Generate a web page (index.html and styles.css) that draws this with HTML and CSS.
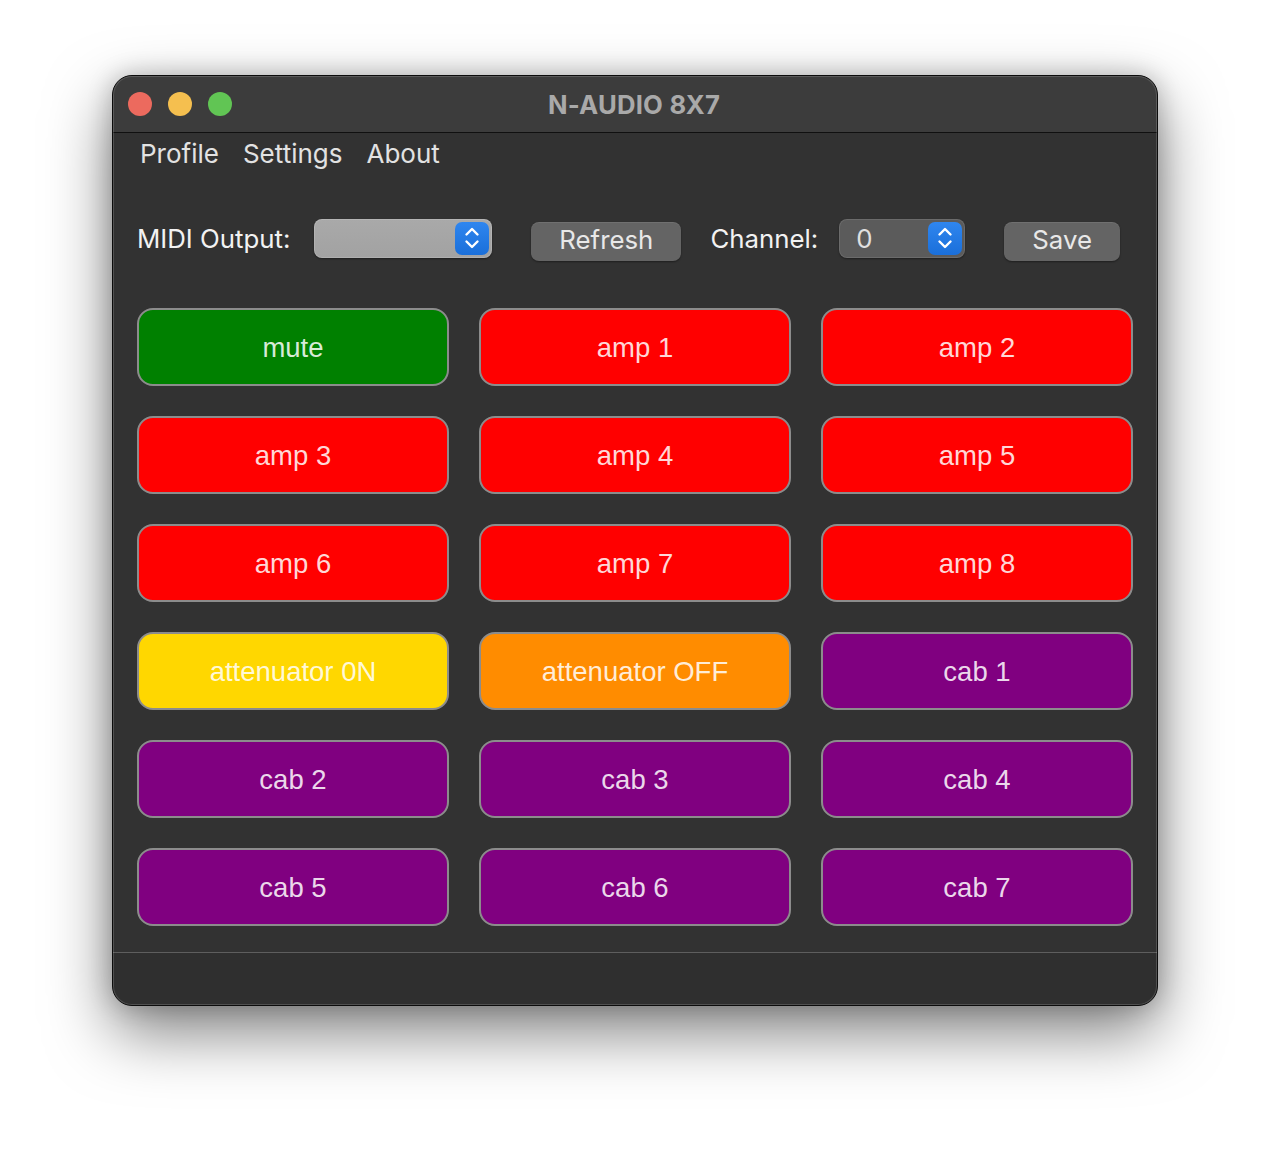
FILE: index.html
```html
<!DOCTYPE html>
<html>
<head>
<meta charset="utf-8">
<link rel="stylesheet" href="styles.css">
</head>
<body>
<div class="window">
  <div class="titlebar">
    <div class="lights">
      <span class="light red"></span>
      <span class="light yellow"></span>
      <span class="light green"></span>
    </div>
    <div class="title">N-AUDIO 8X7</div>
  </div>
  <div class="content">
    <nav class="menu">
      <span class="menu-item">Profile</span>
      <span class="menu-item">Settings</span>
      <span class="menu-item">About</span>
    </nav>
    <div class="controls">
      <span class="label">MIDI Output:</span>
      <div class="popup">
        <span class="stepper"><svg width="20" height="28" viewBox="0 0 20 28"><path d="M4.5 10.5 L10 5 L15.5 10.5 M4.5 17.5 L10 23 L15.5 17.5" fill="none" stroke="#fff" stroke-width="2.4" stroke-linecap="round" stroke-linejoin="round"/></svg></span>
      </div>
      <button class="btn refresh">Refresh</button>
      <span class="label channel-label">Channel:</span>
      <div class="spinner">
        <span class="spin-value">0</span>
        <span class="stepper"><svg width="20" height="28" viewBox="0 0 20 28"><path d="M4.5 10.5 L10 5 L15.5 10.5 M4.5 17.5 L10 23 L15.5 17.5" fill="none" stroke="#fff" stroke-width="2.4" stroke-linecap="round" stroke-linejoin="round"/></svg></span>
      </div>
      <button class="btn save">Save</button>
    </div>
    <div class="grid">
      <div class="pad green">mute</div>
      <div class="pad red">amp 1</div>
      <div class="pad red">amp 2</div>
      <div class="pad red">amp 3</div>
      <div class="pad red">amp 4</div>
      <div class="pad red">amp 5</div>
      <div class="pad red">amp 6</div>
      <div class="pad red">amp 7</div>
      <div class="pad red">amp 8</div>
      <div class="pad gold">attenuator 0N</div>
      <div class="pad orange">attenuator OFF</div>
      <div class="pad purple">cab 1</div>
      <div class="pad purple">cab 2</div>
      <div class="pad purple">cab 3</div>
      <div class="pad purple">cab 4</div>
      <div class="pad purple">cab 5</div>
      <div class="pad purple">cab 6</div>
      <div class="pad purple">cab 7</div>
    </div>
  </div>
  <div class="footer"></div>
</div>
</body>
</html>
```
FILE: styles.css
```css
* { box-sizing: border-box; }
html, body { margin: 0; padding: 0; background: #ffffff; }
body {
  font-family: "Inter", "Open Sans", sans-serif;
  min-height: 1154px;
  padding: 75px 0 148px 112px;
}

.window {
  width: 1046px;
  height: 931px;
  border: 1px solid #0c0c0c;
  border-radius: 20px;
  background: #323232;
  overflow: hidden;
  box-shadow: 0 26px 64px rgba(0,0,0,0.5), 0 0 24px rgba(0,0,0,0.22);
  display: flex;
  flex-direction: column;
  position: relative;
}
.window::after {
  content: "";
  position: absolute;
  inset: 0;
  border-radius: 19px;
  box-shadow: inset 0 0 0 1px rgba(255,255,255,0.16);
  pointer-events: none;
}

.titlebar {
  height: 57px;
  flex: none;
  background: #3c3c3c;
  border-bottom: 1px solid #101010;
  display: flex;
  align-items: center;
  position: relative;
}
.lights {
  display: flex;
  gap: 16px;
  padding-left: 15px;
}
.light {
  width: 24px;
  height: 24px;
  border-radius: 50%;
  display: block;
}
.light.red { background: #ec6a5e; }
.light.yellow { background: #f5bf4f; }
.light.green { background: #61c554; }
.title {
  position: absolute;
  left: 0;
  right: 0;
  top: 0;
  bottom: 0;
  display: flex;
  align-items: center;
  justify-content: center;
  font-weight: 700;
  font-size: 25.7px;
  color: #a9a9a9;
  letter-spacing: 0.2px;
  padding-right: 2px;
}

.content {
  flex: 1;
  padding: 0 24px 0 24px;
  display: flex;
  flex-direction: column;
}
.menu {
  display: flex;
  gap: 24px;
  height: 40px;
  align-items: center;
  padding-left: 3px;
  font-size: 26px;
  color: #e2e2e2;
}

.controls {
  margin-top: 45px;
  height: 40px;
  display: flex;
  align-items: center;
}
.label {
  font-size: 25.8px;
  color: #f2f2f2;
}
.popup {
  margin-left: 24px;
  width: 178px;
  height: 39px;
  border-radius: 8px;
  background: linear-gradient(#a9a9a9, #a2a2a2);
  box-shadow: 0 1px 2px rgba(0,0,0,0.4), inset 0 0 0 1px rgba(255,255,255,0.15);
  display: flex;
  align-items: center;
  justify-content: flex-end;
  padding-right: 3px;
}
.stepper {
  width: 34px;
  height: 33px;
  border-radius: 7px;
  background: linear-gradient(#2f86ef, #1a6fda);
  display: flex;
  align-items: center;
  justify-content: center;
}
.stepper svg { display: block; }
.btn {
  font-family: inherit;
  font-size: 25.8px;
  color: #e8e8e8;
  background: #646464;
  border: none;
  border-radius: 8px;
  height: 39px;
  margin-top: 6px;
  padding: 0 0 4px 0;
  box-shadow: 0 1px 2px rgba(0,0,0,0.4), inset 0 1px 0 rgba(255,255,255,0.08);
}
.refresh { margin-left: 39px; width: 150px; }
.channel-label { margin-left: 29px; }
.spinner {
  margin-left: 21px;
  width: 126px;
  height: 39px;
  border-radius: 8px;
  background: #5b5b5b;
  box-shadow: 0 1px 2px rgba(0,0,0,0.4), inset 0 0 0 1px rgba(255,255,255,0.1);
  display: flex;
  align-items: center;
  justify-content: space-between;
  padding: 0 3px 0 17px;
}
.spin-value { font-size: 25.8px; color: #e0e0e0; }
.save { margin-left: 39px; width: 116px; }

.grid {
  margin-top: 50px;
  display: grid;
  grid-template-columns: repeat(3, 312px);
  grid-auto-rows: 78px;
  column-gap: 30px;
  row-gap: 30px;
}
.pad {
  border: 2px solid #8c8c8c;
  border-radius: 16px;
  display: flex;
  align-items: center;
  justify-content: center;
  padding-top: 2px;
  font-family: "Liberation Sans", Arial, sans-serif;
  font-size: 27.5px;
  color: rgba(255,255,255,0.85);
}
.pad.green { background: #008000; }
.pad.red { background: #ff0000; }
.pad.gold { background: #ffd700; }
.pad.orange { background: #ff8c00; }
.pad.purple { background: #800080; }

.footer {
  height: 53px;
  flex: none;
  border-top: 1px solid #5e5e5e;
  background: #2f2f2f;
}
```
